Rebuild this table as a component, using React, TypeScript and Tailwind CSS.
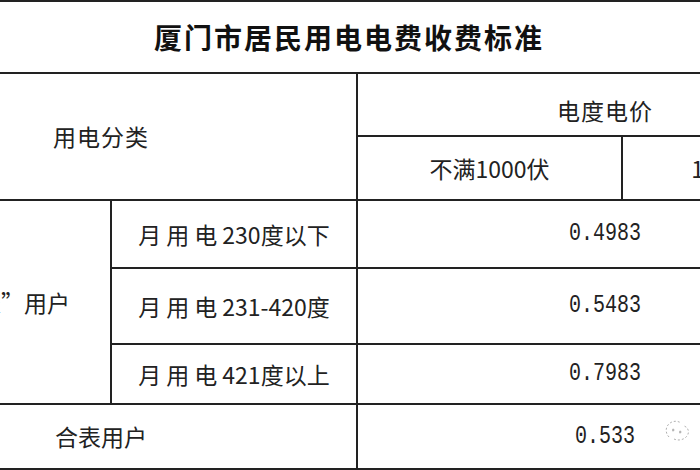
const cjk = "font-['Noto_Sans_CJK_SC',sans-serif]";
const mono = "inline-block scale-y-[1.25] font-['Liberation_Mono','Noto_Sans_CJK_SC',monospace] text-[20px] text-[#222]";
const cell = "border-2 border-[#222] p-0 text-center align-middle";

function Label({ head, tail }: { head: string; tail: string }) {
  return (
    <span className={`${cjk} text-[23px] text-[#222]`}>
      <span className="tracking-[5px]">{head}</span>
      <span>{tail}</span>
    </span>
  );
}

function Watermark() {
  return (
    <svg width="34" height="34" viewBox="0 0 34 34" className="absolute right-[158px] top-[8px]" fill="none" stroke="#b0b0b0" strokeWidth="1" strokeDasharray="2 2">
      <path d="M9 24c-3-3-4-8-1-12s9-5 13-2" />
      <path d="M14 26c4 2 10 1 13-3s1-9-3-10" />
      <circle cx="13" cy="17" r="1" fill="#b0b0b0" />
      <circle cx="20" cy="19" r="1" fill="#b0b0b0" />
    </svg>
  );
}

export default function App() {
  return (
    <div className="w-[700px] h-[470px] overflow-hidden bg-white">
      <table className="-ml-[156px] w-[1008px] table-fixed border-collapse">
        <colgroup>
          <col className="w-[266px]" />
          <col className="w-[246px]" />
          <col className="w-[265px]" />
          <col className="w-[231px]" />
        </colgroup>
        <tbody>
          <tr className="h-[72px]">
            <td colSpan={4} className={`${cell} border-x-0`}>
              <span className={`${cjk} text-[28px] font-bold tracking-[2px] text-[#111]`}>
                厦门市居民用电电费收费标准
              </span>
            </td>
          </tr>
          <tr className="h-[63px]">
            <td colSpan={2} rowSpan={2} className={cell}>
              <span className={`${cjk} text-[23px] tracking-[1px] text-[#222]`}>用电分类</span>
            </td>
            <td colSpan={2} className={`${cell} pt-3`}>
              <span className={`${cjk} text-[23px] tracking-[1px] text-[#222]`}>电度电价</span>
            </td>
          </tr>
          <tr className="h-[64px]">
            <td className={cell}>
              <span className={`${cjk} text-[23px] text-[#222]`}>不满1000伏</span>
            </td>
            <td className={cell}>
              <span className={`${cjk} text-[23px] text-[#222]`}>1-10千伏</span>
            </td>
          </tr>
          <tr className="h-[68px]">
            <td rowSpan={3} className={cell}>
              <span className={`${cjk} text-[23px] text-[#222]`}>“一户一表”用户</span>
            </td>
            <td className={cell}>
              <Label head="月用电" tail="230度以下" />
            </td>
            <td colSpan={2} className={cell}>
              <span className={mono}>0.4983</span>
            </td>
          </tr>
          <tr className="h-[76px]">
            <td className={cell}>
              <Label head="月用电" tail="231-420度" />
            </td>
            <td colSpan={2} className={cell}>
              <span className={mono}>0.5483</span>
            </td>
          </tr>
          <tr className="h-[60px]">
            <td className={cell}>
              <Label head="月用电" tail="421度以上" />
            </td>
            <td colSpan={2} className={cell}>
              <span className={mono}>0.7983</span>
            </td>
          </tr>
          <tr className="h-[65px]">
            <td colSpan={2} className={cell}>
              <span className={`${cjk} text-[23px] text-[#222]`}>合表用户</span>
            </td>
            <td colSpan={2} className={`${cell} relative`}>
              <span className={mono}>0.533</span>
              <Watermark />
            </td>
          </tr>
        </tbody>
      </table>
    </div>
  );
}
